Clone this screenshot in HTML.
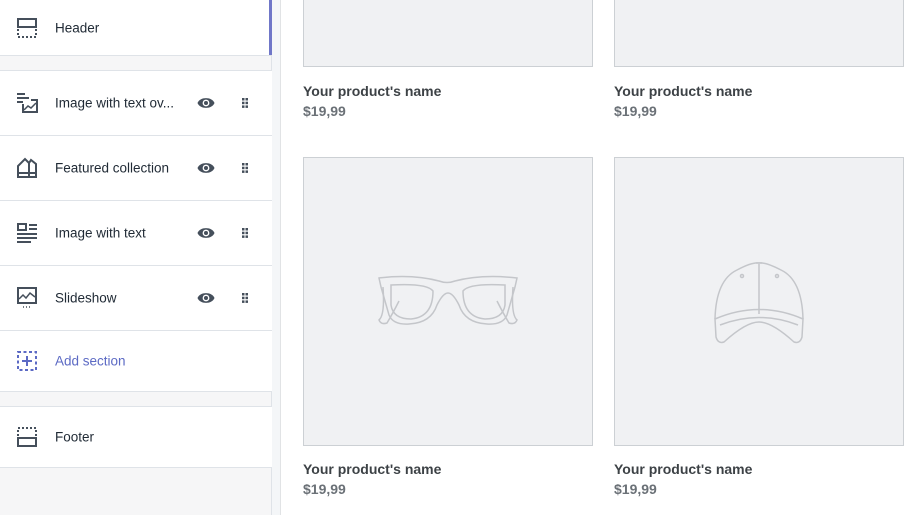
<!DOCTYPE html>
<html><head><style>
*{margin:0;padding:0;box-sizing:border-box}
body{width:912px;height:515px;overflow:hidden;background:#fff;font-family:"Liberation Sans",sans-serif;position:relative}
#side{position:absolute;left:0;top:0;width:272px;height:515px;background:#f6f6f7;border-right:1px solid #dfe3e8}
#rail{position:absolute;left:272px;top:0;width:9px;height:515px;background:#f4f6f8;border-right:1px solid #e1e3e5}
.it{position:absolute;left:0;width:272px;background:#fff;border-bottom:1px solid #dfe3e8;font-size:13.5px;color:#212b36}
.it .ic{position:absolute;left:16px;top:50%;margin-top:-11px}
.it .t{position:absolute;left:55px;top:50%;transform:translateY(-50%);white-space:nowrap}
.eye{position:absolute;left:197px;top:50%;margin-top:-7px}
.drag{position:absolute;left:242px;top:50%;margin-top:-5px}
.box{position:absolute;background:#f0f1f3;border:1px solid #ccd0d4}
.nm{position:absolute;font-size:14px;font-weight:bold;color:#3d4246}
.pr{position:absolute;font-size:14px;font-weight:bold;color:#6b7177}
</style></head><body>
<svg width="0" height="0" style="position:absolute"><defs>
<g id="eye"><path d="M0.5 7C3 0.5 15 0.5 17.5 7C15 13.5 3 13.5 0.5 7Z" fill="#454f5b"/><circle cx="9" cy="7" r="3.4" fill="#fff"/><circle cx="9" cy="7" r="2" fill="#454f5b"/></g>
<g id="drag" fill="#454f5b"><rect x="0" y="0" width="2.5" height="2.5"/><rect x="3.5" y="0" width="2.5" height="2.5"/><rect x="0" y="3.7" width="2.5" height="2.5"/><rect x="3.5" y="3.7" width="2.5" height="2.5"/><rect x="0" y="7.4" width="2.5" height="2.5"/><rect x="3.5" y="7.4" width="2.5" height="2.5"/></g>
</defs></svg>
<div id="side">
<div class="it" style="top:0;height:56px"><svg class="ic" width="22" height="22" viewBox="0 0 22 22"><rect x="2" y="2" width="18" height="8" fill="none" stroke="#454f5b" stroke-width="2"/><rect x="2" y="10" width="18" height="10" fill="none" stroke="#454f5b" stroke-width="2" stroke-dasharray="2 2"/></svg><span class="t">Header</span><div style="position:absolute;right:0;top:0;width:3px;height:55px;background:#7077c8"></div></div>
<div class="it" style="top:70px;height:66px;border-top:1px solid #dfe3e8"><svg class="ic" width="22" height="22" viewBox="0 0 22 22" fill="none" stroke="#454f5b" stroke-width="2"><path d="M1 2h8M1 6h12M1 10h6M7 12v8h14V8h-6"/><path d="M8 18l4-4 3 2 5-5" stroke-width="1.5"/></svg><span class="t">Image with text ov...</span><svg class="eye" width="18" height="14"><use href="#eye"/></svg><svg class="drag" width="6" height="10"><use href="#drag"/></svg></div>
<div class="it" style="top:136px;height:65px"><svg class="ic" width="22" height="22" viewBox="0 0 22 22" fill="none" stroke="#454f5b" stroke-width="2"><path d="M2 20V9l7-7 4 4 2-3 5 4v13ZM2 16h18M13 6v14"/></svg><span class="t">Featured collection</span><svg class="eye" width="18" height="14"><use href="#eye"/></svg><svg class="drag" width="6" height="10"><use href="#drag"/></svg></div>
<div class="it" style="top:201px;height:65px"><svg class="ic" width="22" height="22" viewBox="0 0 22 22" fill="none" stroke="#454f5b" stroke-width="2"><rect x="2" y="2" width="8" height="6"/><path d="M13 3h8M13 7h8M1 12h20M1 16h20M1 20h14"/></svg><span class="t">Image with text</span><svg class="eye" width="18" height="14"><use href="#eye"/></svg><svg class="drag" width="6" height="10"><use href="#drag"/></svg></div>
<div class="it" style="top:266px;height:65px"><svg class="ic" width="22" height="22" viewBox="0 0 22 22" fill="none" stroke="#454f5b" stroke-width="2"><rect x="2" y="1" width="18" height="15"/><path d="M3 12l4-4 3 3 4-5 5 4" stroke-width="1.5"/><path d="M7 20h1M10 20h1M13 20h1" stroke-width="1.5"/></svg><span class="t">Slideshow</span><svg class="eye" width="18" height="14"><use href="#eye"/></svg><svg class="drag" width="6" height="10"><use href="#drag"/></svg></div>
<div class="it" style="top:331px;height:61px"><svg class="ic" width="22" height="22" viewBox="0 0 22 22" fill="none" stroke="#5c6ac4" stroke-width="2"><rect x="2" y="2" width="18" height="18" stroke-dasharray="3 2.5"/><path d="M11 6v10M6 11h10"/></svg><span class="t" style="color:#5c6ac4">Add section</span></div>
<div class="it" style="top:406px;height:62px;border-top:1px solid #dfe3e8"><svg class="ic" width="22" height="22" viewBox="0 0 22 22"><rect x="2" y="2" width="18" height="10" fill="none" stroke="#454f5b" stroke-width="2" stroke-dasharray="2 2"/><rect x="2" y="12" width="18" height="8" fill="none" stroke="#454f5b" stroke-width="2"/></svg><span class="t">Footer</span></div>
</div>
<div id="rail"></div>
<div class="box" style="left:303px;top:-5px;width:290px;height:72px"></div>
<div class="box" style="left:614px;top:-5px;width:290px;height:72px"></div>
<div class="nm" style="left:303px;top:83px">Your product's name</div><div class="pr" style="left:303px;top:103px">$19,99</div>
<div class="nm" style="left:614px;top:83px">Your product's name</div><div class="pr" style="left:614px;top:103px">$19,99</div>
<div class="box" style="left:303px;top:157px;width:290px;height:289px">
<svg style="position:absolute;left:73px;top:117px" width="142" height="52" viewBox="0 0 142 52" fill="none" stroke="#c4c6ca" stroke-width="1.5"><path d="M2 3Q35 -1 62 6Q70 9 78 6Q105 -1 140 3L138 12L130 40Q126 50 110 49Q88 48 82 30Q76 18 71 18Q66 18 60 30Q54 48 32 49Q16 50 12 40L4 12Z"/><path d="M14 10Q50 8 56 16Q56 42 34 44Q16 44 14 30Z M128 10Q92 8 86 16Q86 42 108 44Q126 44 128 30Z"/><path d="M6 12Q8 40 2 45Q4 50 10 48Q16 38 22 26M136 12Q134 40 140 45Q138 50 132 48Q126 38 120 26"/></svg></div>
<div class="box" style="left:614px;top:157px;width:290px;height:289px">
<svg style="position:absolute;left:97px;top:102px" width="94" height="86" viewBox="0 0 94 86" fill="none" stroke="#c4c6ca" stroke-width="1.5"><path d="M3 59Q4 20 25 10Q40 2 47 3Q54 2 69 10Q90 20 91 59"/><path d="M44 3h6M47 4v50"/><circle cx="30" cy="16" r="1.5"/><circle cx="65" cy="16" r="1.5"/><path d="M3 59Q47 40 91 59L90 77Q88 84 82 82Q60 62 47 62Q34 62 12 82Q6 84 4 77Z"/><path d="M8 65Q47 50 86 65"/></svg></div>
<div class="nm" style="left:303px;top:461px">Your product's name</div><div class="pr" style="left:303px;top:481px">$19,99</div>
<div class="nm" style="left:614px;top:461px">Your product's name</div><div class="pr" style="left:614px;top:481px">$19,99</div>
</body></html>
